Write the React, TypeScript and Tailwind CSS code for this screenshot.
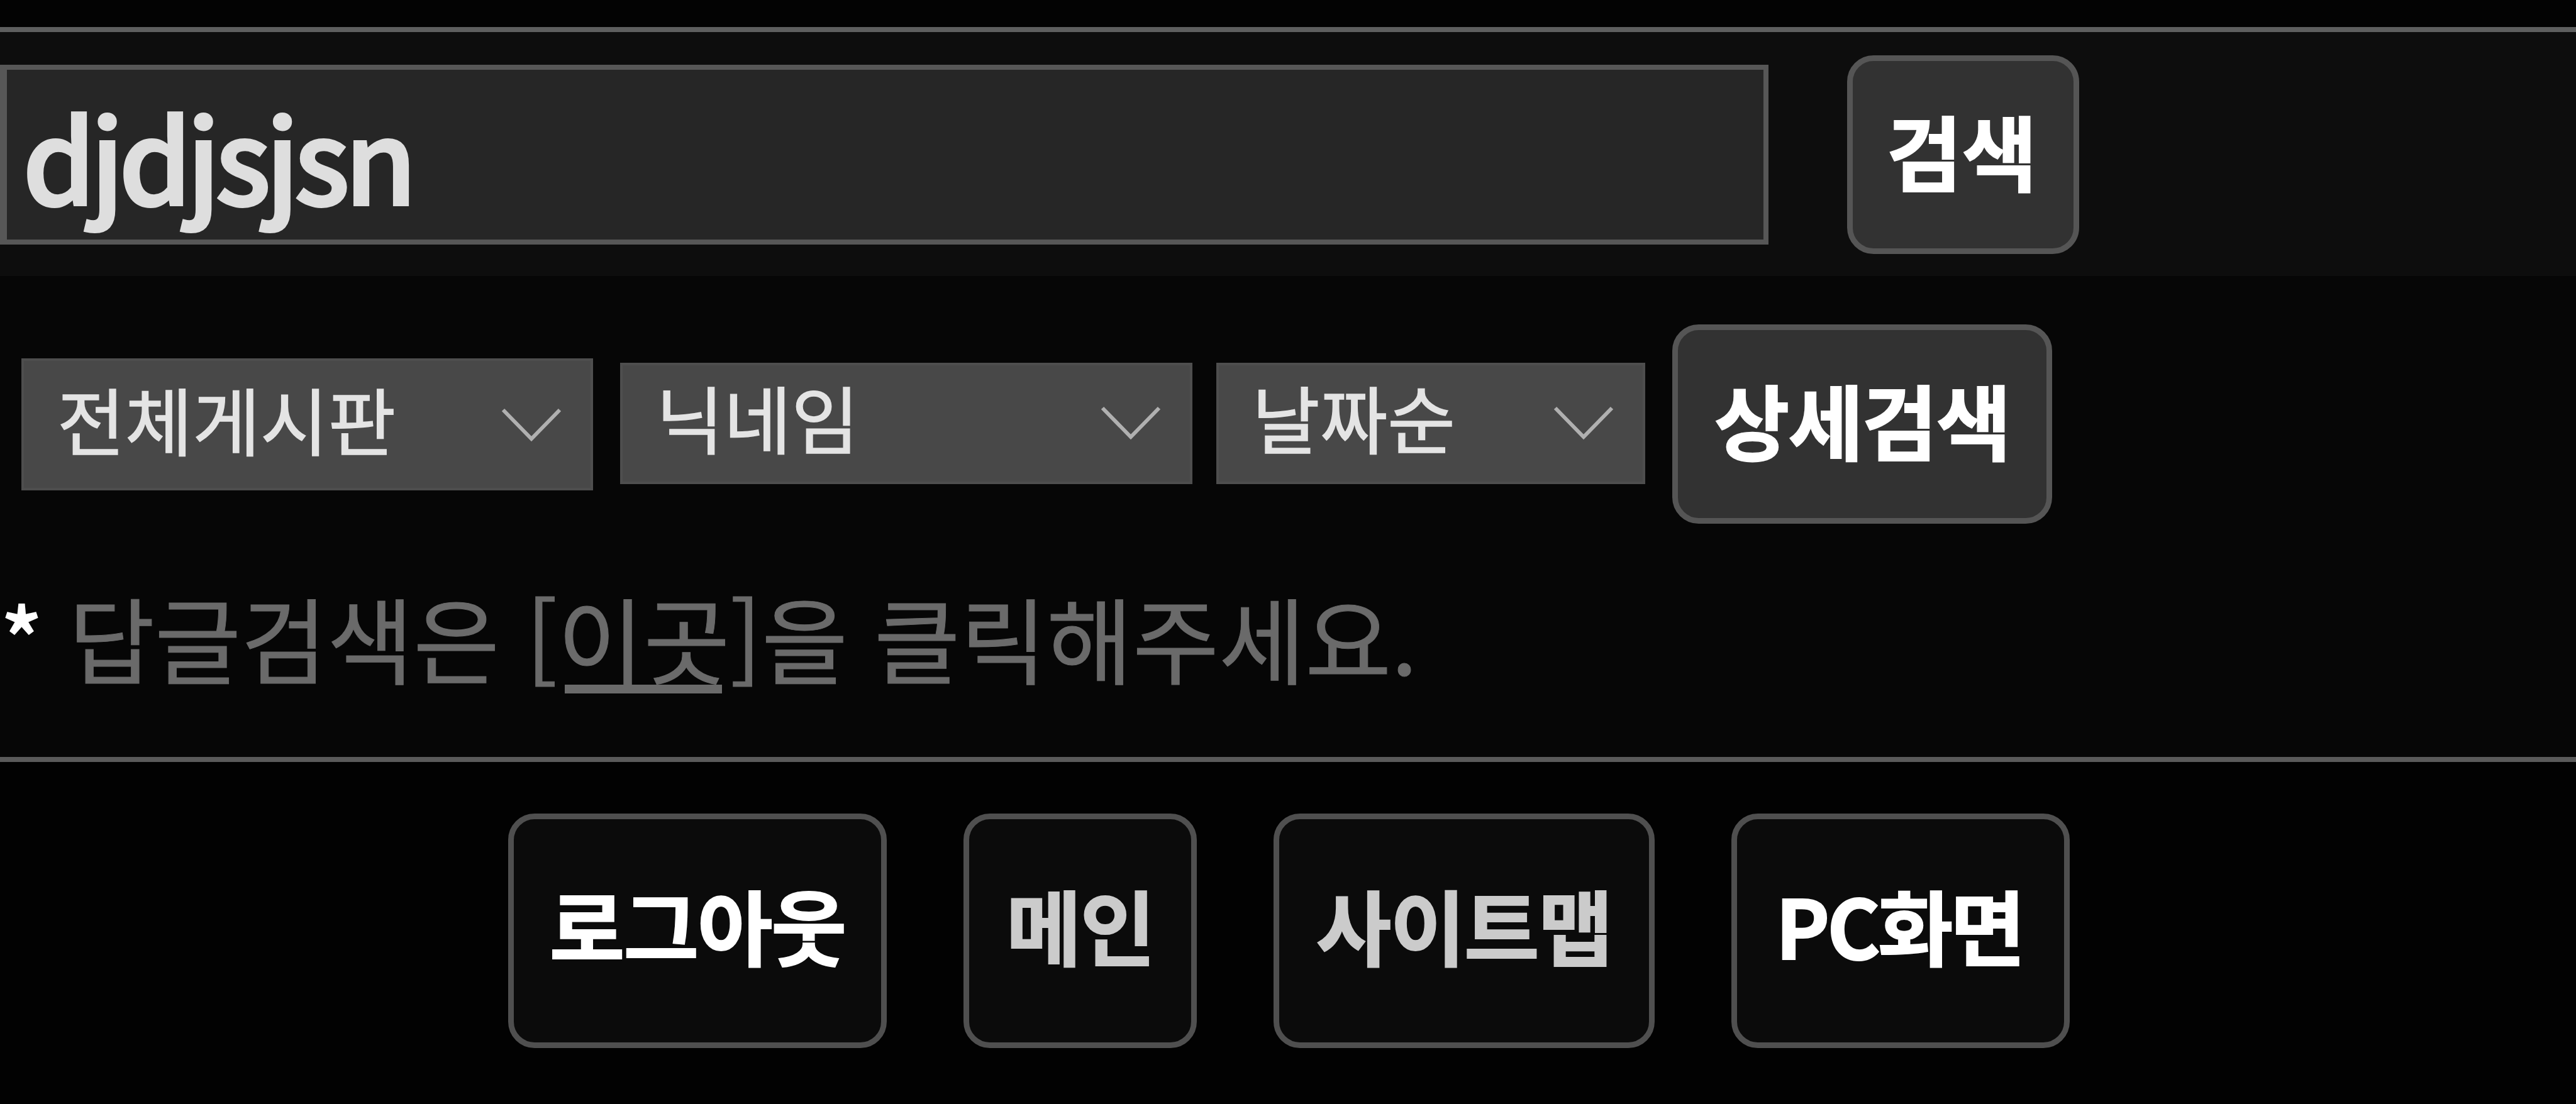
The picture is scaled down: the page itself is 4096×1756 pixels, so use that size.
import React from 'react';
import clsx from 'clsx';

interface SelectProps {
  label: string;
  className: string;
}

interface ButtonProps {
  label: string;
  className: string;
}

const footerLinks: ButtonProps[] = [
  { label: '로그아웃', className: 'ml-[808px] w-[602px] tracking-[-2px] text-white' },
  { label: '메인', className: 'ml-[122px] w-[371px] tracking-[-2px] text-[#cbcbcb]' },
  { label: '사이트맵', className: 'ml-[122px] w-[606px] tracking-[-2px] text-[#cbcbcb]' },
  { label: 'PC화면', className: 'ml-[122px] w-[538px] pr-[5px] tracking-[-4.5px] text-white' },
];

function Select({ label, className }: SelectProps) {
  return (
    <div className={clsx('flex shrink-0 items-center justify-between border-4 border-[#4e4e4e] bg-[#484848]', className)}>
      <span className="whitespace-nowrap text-[117px] leading-[120px] text-[#e4e4e4] [-webkit-text-stroke:1.5px_#e4e4e4]">{label}</span>
      <svg width="96" height="54" viewBox="0 0 96 54" fill="none" className="mt-[22px] shrink-0">
        <path d="M3 3L48 49L93 3" stroke="#b0b0b0" strokeWidth="6" />
      </svg>
    </div>
  );
}

function Button({ label, className }: ButtonProps) {
  return (
    <button
      className={clsx(
        'flex shrink-0 items-center justify-center whitespace-nowrap rounded-[42px] border-[9px] text-[130px] font-bold leading-[130px] [-webkit-text-stroke:2px_currentColor]',
        className,
      )}
    >
      {label}
    </button>
  );
}

export default function App() {
  return (
    <div
      lang="ko"
      className="flex h-[1756px] w-[4096px] flex-col overflow-hidden bg-[#060606] font-['Noto_Sans_CJK_KR','Noto_Sans',sans-serif]"
    >
      <div className="h-[51px] shrink-0 border-b-8 border-[#5e5f5f] bg-[#030303]" />

      <form className="flex h-[388px] shrink-0 items-start bg-[#0d0d0d]">
        <div className="mt-[52px] flex h-[286px] w-[2812px] items-center border-8 border-l-[11px] border-[#575757] bg-[#262626] pl-[25px]">
          <span className="text-[184px] font-medium leading-[200px] tracking-[-8px] text-[#dedede] [-webkit-text-stroke:4px_#dedede]">
            djdjsjsn
          </span>
        </div>
        <Button label="검색" className="ml-[125px] mt-[37px] h-[316px] w-[369px] border-[#555555] bg-[#323232] pb-[19px] pr-[4px] text-white" />
      </form>

      <div className="mt-[77px] flex h-[318px] shrink-0 items-start">
        <Select label="전체게시판" className="ml-[34px] mt-[54px] h-[210px] w-[909px] pb-[20px] pl-[53px] pr-[46px]" />
        <Select label="닉네임" className="ml-[43px] mt-[61px] h-[193px] w-[910px] pb-[23px] pl-[53px] pr-[46px]" />
        <Select label="날짜순" className="ml-[38px] mt-[61px] h-[193px] w-[682px] pb-[23px] pl-[53px] pr-[46px]" />
        <Button label="상세검색" className="ml-[43px] h-[317px] w-[604px] border-[#555555] bg-[#323232] pb-[20px] tracking-[-2px] text-white" />
      </div>

      <p className="mt-[78px] flex h-[292px] shrink-0 whitespace-pre text-[149px] leading-[200px] text-[#6a6a6a] [-webkit-text-stroke:1px_#6a6a6a]">
        <span className="w-[109px] pl-[2px] text-[128px] font-bold leading-[192px] text-white [-webkit-text-stroke:0px]">*</span>
        <span>답글검색은 [</span>
        <a className="relative">
          이곳
          <span className="absolute left-[12px] top-[177px] h-[14px] w-[250px] bg-[#6a6a6a]" />
        </a>
        <span>]을 클릭해주세요.</span>
      </p>

      <div className="flex grow items-start border-t-8 border-[#5a5a5a] bg-[#020202] pt-[82px]">
        {footerLinks.map((link) => (
          <Button
            key={link.label}
            label={link.label}
            className={clsx('h-[373px] border-[#4f4f4f] bg-[#0b0b0b] pb-[23px]', link.className)}
          />
        ))}
      </div>
    </div>
  );
}
